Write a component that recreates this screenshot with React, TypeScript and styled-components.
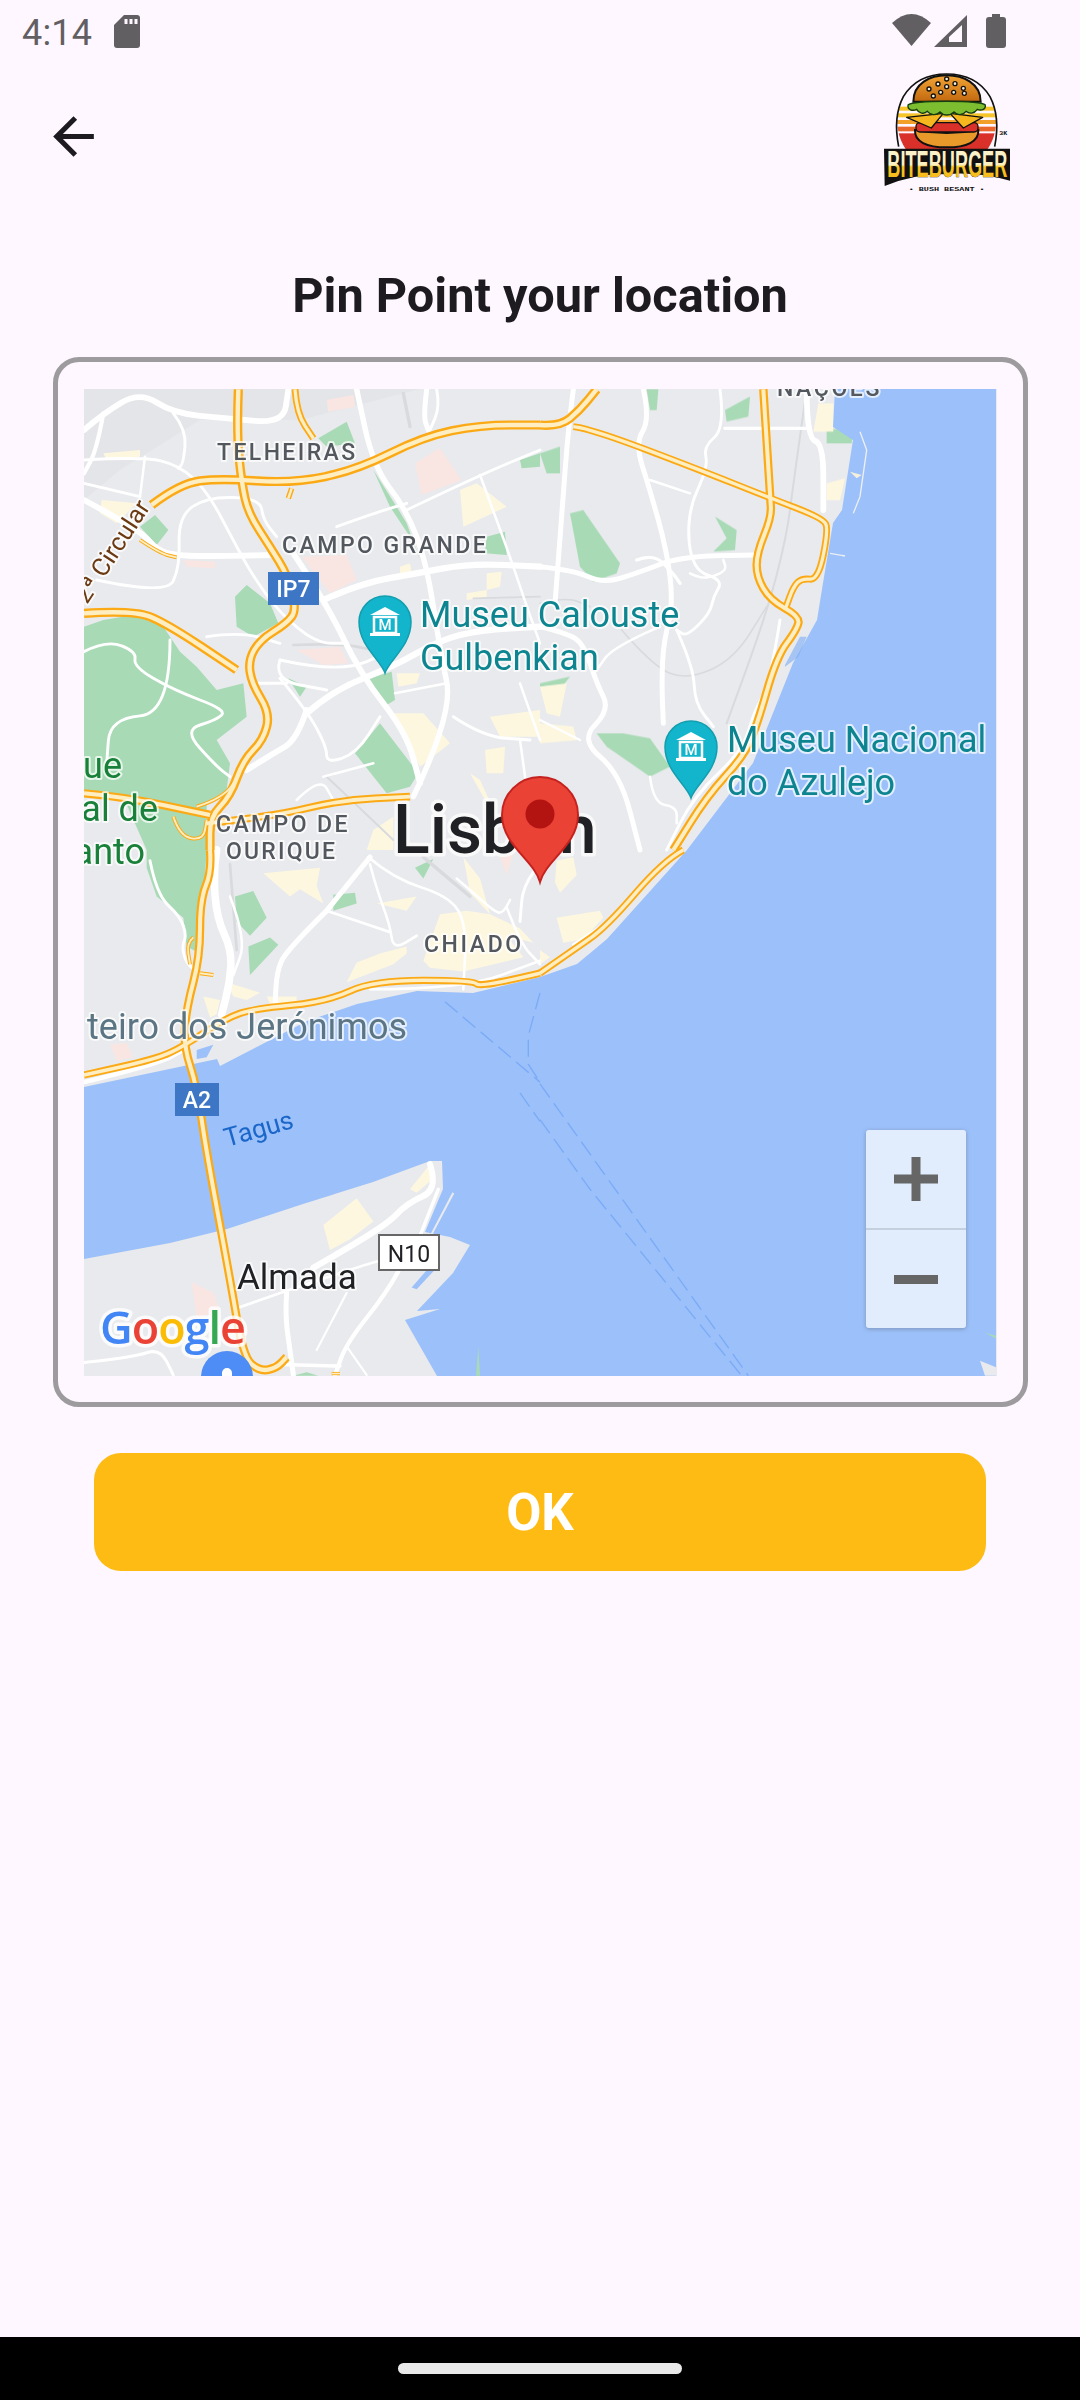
import React from "react";
import styled, { createGlobalStyle } from "styled-components";

const GlobalStyle = createGlobalStyle`
  html, body { margin: 0; padding: 0; background: #fef7ff; }
  body { font-family: Roboto, "Liberation Sans", sans-serif; }
  * { box-sizing: border-box; }
`;

const Page = styled.div`
  width: 1080px;
  height: 2400px;
  display: flex;
  flex-direction: column;
  background: #fef7ff;
  overflow: hidden;
`;
const StatusBar = styled.div`
  height: 64px;
  padding: 14px 74px 0 22px;
  display: flex;
  align-items: flex-start;
  color: #625f63;
`;
const Clock = styled.span`
  font-size: 36px;
  line-height: 36px;
  margin-top: 1px;
  width: 92px;
  letter-spacing: 0.2px;
`;
const StatusSpacer = styled.div`
  flex: 1;
`;
const StatusIcons = styled.div`
  display: flex;
  gap: 3px;
  align-items: flex-start;
`;
const Header = styled.header`
  margin-top: 9px;
  height: 119px;
  padding: 0 70px 0 43px;
  display: flex;
  justify-content: space-between;
  align-items: flex-start;
`;
const BackButton = styled.button`
  margin-top: 33px;
  width: 61px;
  height: 61px;
  padding: 0;
  border: 0;
  background: none;
  color: #1d1b20;
`;
const Title = styled.h1`
  margin: 79px 0 0;
  text-align: center;
  font-size: 48.7px;
  line-height: 50px;
  font-weight: 700;
  color: #1d1b20;
`;
const MapFrame = styled.section`
  margin: 36px 0 0 53px;
  width: 975px;
  height: 1050px;
  padding: 27px 26px 26px 26px;
  border: 5px solid #9e9b9e;
  border-radius: 26px;
`;
const MapBox = styled.div`
  position: relative;
  width: 913px;
  height: 987px;
  overflow: hidden;
  background: #e8eaed;
`;
const MapSvg = styled.svg`
  display: block;
`;
const SoftLayer = styled.g`
  filter: blur(0.5px);
`;
const ZoomControl = styled.div`
  position: absolute;
  right: 31px;
  bottom: 48px;
  width: 100px;
  border-radius: 3px;
  overflow: hidden;
  display: flex;
  flex-direction: column;
  box-shadow: 0 1px 4px rgba(60, 64, 67, 0.35);
`;
const ZoomButton = styled.button<{ $divider?: boolean }>`
  height: ${(p) => (p.$divider ? 100 : 98)}px;
  padding: 0;
  border: 0;
  border-top: ${(p) => (p.$divider ? "2px solid rgba(190,200,215,.8)" : "0")};
  background: rgba(255, 255, 255, 0.7);
  display: flex;
  align-items: center;
  justify-content: center;
`;
const OkButton = styled.button`
  margin: 46px 0 0 94px;
  width: 892px;
  height: 118px;
  border: 0;
  border-radius: 27px;
  background: #febb14;
  color: #fff;
  font-family: Roboto, sans-serif;
  font-size: 51px;
  font-weight: 700;
`;
const Spacer = styled.div`
  flex: 1;
`;
const NavBar = styled.div`
  height: 63px;
  background: #000;
  display: flex;
  justify-content: center;
  padding-top: 26px;
`;
const HomePill = styled.div`
  width: 284px;
  height: 11px;
  border-radius: 6px;
  background: #e9e9e9;
`;
const MapLabel = styled.text<{ $size: number; $color: string; $weight?: number; $spacing?: number; $halo?: number }>`
  font-family: Roboto, sans-serif;
  font-size: ${(p) => p.$size}px;
  font-weight: ${(p) => p.$weight ?? 400};
  letter-spacing: ${(p) => p.$spacing ?? 0}px;
  fill: ${(p) => p.$color};
  stroke: rgba(255, 255, 255, 0.72);
  stroke-width: ${(p) => p.$halo ?? 4}px;
  stroke-linejoin: round;
  paint-order: stroke;
`;
const ShieldText = styled.text<{ $color: string; $size: number; $weight?: number }>`
  font-family: Roboto, sans-serif;
  font-size: ${(p) => p.$size}px;
  font-weight: ${(p) => p.$weight ?? 500};
  fill: ${(p) => p.$color};
  text-anchor: middle;
`;
const GoogleMark = styled.text`
  font-family: "Open Sans", Roboto, sans-serif;
  font-size: 45px;
  font-weight: 600;
  letter-spacing: -1px;
  stroke: rgba(255, 255, 255, 0.8);
  stroke-width: 7px;
  stroke-linejoin: round;
  paint-order: stroke;
`;
const LogoWord = styled.text`
  font-family: "Liberation Sans", sans-serif;
  font-size: 108px;
  font-weight: 700;
  stroke: #111;
  stroke-width: 2px;
  paint-order: stroke;
`;
const LogoTag = styled.text`
  font-family: "Liberation Mono", monospace;
  font-size: 17px;
  font-weight: 700;
  fill: #111;
`;

const smooth = (s: string) => {
  const pts = s.trim().split(/\s+/).map((t) => t.split(",").map(Number));
  if (pts.length < 3) return `M${pts.map((p) => p.join(" ")).join("L")}`;
  let d = `M${pts[0][0]} ${pts[0][1]}`;
  for (let i = 1; i < pts.length - 1; i++) {
    const mx = (pts[i][0] + pts[i + 1][0]) / 2;
    const my = (pts[i][1] + pts[i + 1][1]) / 2;
    d += `Q${pts[i][0]} ${pts[i][1]} ${mx} ${my}`;
  }
  const l = pts[pts.length - 1];
  return `${d}L${l[0]} ${l[1]}`;
};

type Road = [string, number];
type Quad = {
  t: string;
  parks: string[];
  pinks: string[];
  creams: string[];
  rail: Road[];
  whites: Road[];
  highways: Road[];
};

const quads: Quad[] = [
  {
    t: "translate(40 350) scale(.33333)",
    parks: [
      "132,830 190,810 280,795 370,830 420,905 470,950 530,1020 610,1000 620,1100 530,1170 570,1240 560,1320 500,1360 500,1500 320,1500 250,1340 132,1330",
      "585,740 620,705 690,760 715,820 640,860 590,830",
      "300,530 345,495 385,540 350,585",
      "835,265 920,215 945,280 860,290",
      "1000,360 1070,470 1100,520 1140,630 1110,560 1050,470",
      "985,985 1055,965 1065,1050 1040,1065",
      "945,1210 1020,1120 1135,1270 1110,1310 1040,1330",
      "745,985 800,1010 780,1040",
      "1340,560 1395,545 1400,615 1335,610",
      "1440,330 1500,310 1500,350 1445,355",
    ],
    pinks: [
      "860,150 940,135 945,170 865,185",
      "1125,340 1200,295 1265,390 1145,435",
      "785,620 920,615 950,690 870,730",
      "770,900 900,890 925,940 850,945",
      "430,630 525,635 525,655 440,650",
    ],
    creams: [
      "190,310 300,300 300,320 200,330",
      "185,450 290,460 230,520 180,490",
      "1260,420 1310,400 1400,470 1270,530",
      "1070,970 1140,970 1130,1000 1075,1010",
      "1060,1090 1150,1090 1230,1180 1140,1250",
      "1350,1100 1500,1080 1500,1160 1380,1160",
      "1340,670 1385,665 1380,710 1340,720",
      "1280,730 1340,720 1340,740 1280,750",
      "1080,650 1110,640 1115,670 1080,670",
      "1335,1200 1395,1190 1390,1270 1340,1270",
      "1290,1270 1320,1290 1370,1400 1330,1340",
      "1000,1440 1060,1400 1060,1500 980,1500",
    ],
    rail: [["760,885 900,880 1000,900", 8], ["1090,130 1110,230", 10], ["860,1280 1060,1470", 6], ["1300,745 1500,740", 5]],
    whites: [
      ["132,240 190,190 300,125 400,190 560,205 730,220 745,118", 14],
      ["132,450 300,540 350,600 420,620 710,615", 14],
      ["760,610 860,760 960,970 1100,1150 1140,1300", 14],
      ["1120,1340 1240,1090 1200,900 1160,640 1100,480 1000,350 950,118", 13],
      ["850,750 960,700 1130,670 1290,640 1500,650", 15],
      ["800,1090 880,1020 1060,950 1200,870 1320,840 1500,830", 15],
      ["800,1080 770,1170 700,1210 620,1260", 14],
      ["1160,118 1150,200 1165,240", 12],
      ["132,330 310,320 415,345 500,420 590,590 640,680 720,790 830,880 920,880", 7],
      ["132,400 300,440", 7],
      ["190,190 170,300 132,370", 10],
      ["400,190 440,240 430,340 415,355", 7],
      ["315,320 300,440", 6],
      ["170,690 380,735 420,650 415,500 500,440 660,445 670,510 710,560", 7],
      ["1100,480 1320,375 1500,300", 7],
      ["890,530 1000,490 1100,460", 7],
      ["1320,375 1400,590 1450,740 1500,880", 6],
      ["1240,1100 1330,1160 1470,1170", 7],
      ["132,905 200,870 290,905 280,950 400,1020 560,1080 530,1110 430,1140 530,1250 570,1280", 7],
      ["390,870 390,1090 210,1105 200,1240", 7],
      ["720,930 700,990 860,1020", 7],
      ["720,930 900,970 1060,900", 7],
      ["500,860 600,845 720,880", 7],
      ["720,985 800,1080 860,1190 860,1240 950,1210 1020,1100", 7],
      ["850,1280 1000,1240", 6],
      ["1190,118 1200,170 1170,240", 7],
      ["1500,1170 1440,1000", 6],
      ["1065,1030 1220,1000", 6],
      ["770,1350 840,1280 880,1350", 6],
      ["640,1000 740,1000", 7],
      ["1440,1170 1470,1380 1470,1500", 6],
    ],
    highways: [
      ["595,118 590,250 605,400 625,490 690,590 745,680 770,780 740,820 660,870 625,930 635,1000 690,1090 670,1170 610,1230 570,1340 510,1400 510,1500", 24],
      ["335,465 420,400 540,385 760,400 950,360 1150,260 1320,225 1500,225", 24],
      ["132,790 280,780 380,820 590,960", 24],
      ["132,1330 250,1340 510,1395", 22],
      ["500,1420 700,1400 900,1350 1110,1340", 20],
      ["765,118 770,190 820,265", 18],
      ["300,570 360,610 410,622", 10],
      ["470,1370 550,1345 600,1270", 10],
      ["745,445 755,415", 14],
      ["400,1400 420,1460 490,1470 500,1410", 10],
    ],
  },
  {
    t: "translate(540 350) scale(.33333)",
    parks: [
      "320,118 355,118 350,180 330,180",
      "555,180 610,150 630,140 625,200 560,215",
      "860,235 940,240 935,280 860,280",
      "0,310 60,290 60,370 20,370",
      "90,490 130,480 240,640 230,670 160,695 120,650",
      "525,500 590,540 585,600 520,605 560,565",
      "170,1150 250,1150 330,1165 390,1250 330,1280 200,1190",
      "0,1000 90,980 70,1005 0,1010",
    ],
    pinks: [],
    creams: [
      "835,160 880,160 880,245 820,245",
      "860,400 915,385 900,450 860,450",
      "0,1010 80,1000 60,1100 20,1090",
      "0,1120 100,1130 110,1170 0,1180",
    ],
    rail: [["800,118 760,400 740,560 680,790 560,1120", 6], ["245,840 340,950 440,990 580,930 680,770", 5], ["0,760 80,740 150,770", 5]],
    whites: [
      ["100,118 85,230 65,500 45,760", 12],
      ["0,650 100,660 190,700 290,670 420,620 640,615", 12],
      ["310,118 330,210 285,280 330,420 380,600 400,760 370,880 365,1000 370,1120", 12],
      ["800,118 800,265 850,280 850,480", 14],
      ["0,830 80,850 130,880 170,1000 210,1080 120,1170 240,1270 300,1500", 12],
      ["120,1170 0,1110", 6],
      ["540,118 555,235 490,290 505,350 440,490 455,660 550,690 520,740 510,790 440,860 410,840", 7],
      ["555,235 800,235", 8],
      ["330,390 450,430", 6],
      ["290,630 340,610 400,670 420,700", 8],
      ["450,670 480,685 520,680 560,660 550,630", 6],
      ["410,840 460,950 465,1060 520,1130", 7],
      ["360,830 220,890 170,960", 6],
      ["330,1280 340,1360 410,1370 410,1420", 6],
      ["720,810 690,1000 640,1090 610,1200 460,1340 380,1500", 7],
    ],
    highways: [
      ["0,225 60,230 120,180 170,118", 24],
      ["100,230 150,235 480,360 680,440 850,505 865,540 835,690 785,685 760,710 735,780", 18],
      ["670,118 690,440 695,500 650,610 650,680 690,750 780,800 770,840 710,920 650,1130 610,1220 500,1340 400,1500", 22],
    ],
  },
  {
    t: "translate(40 850) scale(.33333 .35714)",
    parks: [
      "320,0 500,0 480,290 440,270 430,190 350,130 320,50",
      "585,130 640,115 680,190 630,240 590,200",
      "625,270 690,245 715,265 630,350",
      "880,125 945,120 950,150 880,170",
      "1125,50 1180,25 1150,80",
      "760,1472 800,1462 835,1472",
    ],
    pinks: ["210,545 260,540 280,580 230,590", "455,1210 520,1240 540,1290 470,1310", "1380,20 1420,10 1400,70"],
    creams: [
      "670,65 840,50 830,100 850,150 780,110 750,130",
      "1010,150 1130,130 1100,170",
      "1200,180 1280,170 1350,180 1440,220 1480,260 1400,240 1450,300 1270,340 1170,330 1150,310",
      "920,370 950,315 1020,290 1100,270 1100,290 1060,320",
      "490,410 540,420 530,460 510,470",
      "680,410 770,410 770,430 690,430",
      "1270,20 1320,80 1350,180 1290,120",
      "560,370 660,400 620,420 580,410",
      "850,1050 950,975 1000,1040 930,1090 870,1120",
      "1110,950 1170,880 1180,920 1130,960",
    ],
    rail: [["1150,20 1290,130", 10], ["570,40 590,280", 8]],
    whites: [
      ["530,0 520,60 530,190 575,280 570,370 545,460", 18],
      ["860,170 740,280 710,340 705,440", 12],
      ["990,20 920,100 860,170", 12],
      ["132,650 350,600 430,560", 10],
      ["1170,880 1195,950 1100,990 1040,1050 820,1170", 14],
      ["1195,950 1140,1080", 8],
      ["740,1240 735,1300 750,1400 760,1470", 12],
      ["1075,1180 1040,1240 920,1380 885,1470", 10],
      ["330,30 350,125 420,185 440,240 425,270 440,320 480,345", 7],
      ["570,130 620,250 580,350", 6],
      ["985,20 1060,80 1230,130 1280,210 1270,390", 6],
      ["990,40 1010,110 1050,210 1060,280 1130,240", 6],
      ["860,170 1050,230", 6],
      ["1400,160 1440,260 1500,320", 6],
      ["1410,140 1390,180 1360,170 1300,120 1250,80", 6],
      ["990,390 1270,390 1500,310", 6],
      ["132,1435 280,1420 360,1395 400,1470", 7],
      ["600,1280 720,1240 980,1160 1020,1150", 6],
      ["830,1400 920,1240", 5],
      ["920,1390 980,1470", 5],
      ["700,1440 900,1445", 8],
      ["1500,40 1450,90 1440,200", 7],
    ],
    highways: [
      ["510,0 515,60 480,140 480,300 440,440 430,545 470,660 500,850 570,1200 610,1420 660,1460 710,1450 740,1420", 22],
      ["1500,345 1320,385 1300,365 1000,365 860,425 640,445 560,470 430,550 350,585 132,630", 18],
      ["480,345 520,350", 10],
      ["460,245 440,260 450,320", 10],
      ["875,1466 900,1466", 8],
    ],
  },
  {
    t: "translate(540 850) scale(.33333 .35714)",
    parks: ["1335,1352 1368,1365 1368,1368"],
    pinks: [],
    creams: [
      "50,30 100,20 110,70 60,120 45,90",
      "50,190 180,170 190,190 130,250 70,260",
      "0,280 30,300 0,320",
    ],
    rail: [],
    whites: [["100,265 190,210", 6]],
    highways: [["430,0 370,30 200,215 100,280 0,345", 18]],
  },
];

const WATER =
  "996,389 835,389 833,427 853,440 842,510 833,523 823,583 817,620 793,663 753,763 687,850 607,939 577,964 540,977 473,993 417,991 357,1004 307,1021 220,1066 217,1059 84,1087 84,1259 170,1243 227,1229 303,1204 373,1182 430,1161 442,1161 443,1189 425,1232 450,1237 470,1245 453,1273 417,1311 440,1309 405,1320 437,1376 996,1376";

const MuseumPin = ({ x, y }: { x: number; y: number }) => (
  <g transform={`translate(${x} ${y})`}>
    <path d="M0 51C-4 38-26 24-26 0A26 26 0 0 1 26 0C26 24 4 38 0 51Z" fill="#12b5cb" stroke="#129eaf" strokeWidth="1.5" />
    <path d="M-15-7L0-15 15-7Z" fill="#fff" />
    <rect x="-11" y="-5" width="22" height="16" fill="none" stroke="#fff" strokeWidth="2.5" />
    <rect x="-15" y="11" width="30" height="3" fill="#fff" />
    <ShieldText $color="#fff" $size={15} y="8">M</ShieldText>
  </g>
);

const MapArt = () => (
  <MapSvg width="913" height="987" viewBox="84 389 913 987">
    <rect x="84" y="389" width="913" height="987" fill="#e8eaed" />
    <SoftLayer>
      <path d="M84 389H420L300 420 200 420 120 470 84 500Z" fill="#e4e5e8" />
      {quads.map((q, i) => (
        <g key={i} transform={q.t}>
          {q.parks.map((s, j) => <polygon key={j} points={s} fill="#a8dab5" />)}
          {q.pinks.map((s, j) => <polygon key={j} points={s} fill="#f9e6e3" />)}
          {q.creams.map((s, j) => <polygon key={j} points={s} fill="#fef7e0" />)}
        </g>
      ))}
      <polygon points={WATER} fill="#9cc0f9" />
      <g transform="translate(40 850) scale(.33333 .35714)">
        <polygon points="1115,1225 1185,1150 1195,1165 1130,1230" fill="#9cc0f9" />
        <polyline points="1240,960 1175,1075" fill="none" stroke="#e8eaed" strokeWidth="6" />
        <polygon points="1315,1390 1320,1472 1308,1472" fill="#a8dab5" />
        <polygon points="470,560 520,545 500,580 470,585" fill="#9cc0f9" />
      </g>
      <g transform="translate(540 850) scale(.33333 .35714)">
        <polygon points="1320,1430 1368,1448 1368,1472 1335,1472" fill="#e8eaed" />
        <polygon points="1335,1352 1368,1360 1368,1368" fill="#a8dab5" />
        <g fill="none" stroke="#7babf7" strokeWidth="4" strokeDasharray="48 20">
          <path d="M0 655 625 1472" />
          <path d="M0 755 150 950 605 1472" />
        </g>
      </g>
      <g transform="translate(40 850) scale(.33333 .35714)" fill="none" stroke="#7babf7" strokeWidth="4" strokeDasharray="48 20">
        <path d="M1215 425 1500 650" />
        <path d="M1500 400 1465 520V600L1500 650" />
        <path d="M1440 680 1500 760" />
      </g>
      <g transform="translate(540 350) scale(.33333)" fill="none" stroke="#eef0f2" strokeWidth="4">
        <path d="M960 245 980 300 960 440 940 490" />
        <path d="M870 610 915 618" />
        <polygon points="930,365 965,375 950,385" fill="#f5efdc" stroke="none" />
        <polygon points="780,860 800,860 775,920 735,950 735,945" fill="#7babf7" stroke="none" opacity=".6" />
      </g>
      {quads.map((q, i) => (
        <g key={i} transform={q.t} fill="none" strokeLinecap="round" strokeLinejoin="round">
          {q.rail.map(([s, w], j) => <path key={j} d={smooth(s)} stroke="#d8dadd" strokeWidth={w} />)}
          {q.whites.map(([s, w], j) => <path key={j} d={smooth(s)} stroke="#fff" strokeWidth={w * 1.25} />)}
        </g>
      ))}
      {quads.map((q, i) => (
        <g key={i} transform={q.t} fill="none" strokeLinecap="butt" strokeLinejoin="round">
          {q.highways.map(([s, w], j) => <path key={j} d={smooth(s)} stroke="#fba914" strokeWidth={w * 1.15} />)}
        </g>
      ))}
      {quads.map((q, i) => (
        <g key={i} transform={q.t} fill="none" strokeLinecap="butt" strokeLinejoin="round">
          {q.highways.map(([s, w], j) => <path key={j} d={smooth(s)} stroke="#feeec2" strokeWidth={w * 0.55} />)}
        </g>
      ))}
    </SoftLayer>

    <MapLabel x="217" y="460" $size={23} $weight={500} $spacing={2.4} $color="#53575e">TELHEIRAS</MapLabel>
    <MapLabel x="282" y="553" $size={23} $weight={500} $spacing={2.5} $color="#53575e">CAMPO GRANDE</MapLabel>
    <MapLabel x="216" y="832" $size={23} $weight={500} $spacing={2.4} $color="#53575e">CAMPO DE</MapLabel>
    <MapLabel x="226" y="859" $size={23} $weight={500} $spacing={2.2} $color="#53575e">OURIQUE</MapLabel>
    <MapLabel x="424" y="952" $size={23} $weight={500} $spacing={2.6} $color="#53575e">CHIADO</MapLabel>
    <MapLabel x="777" y="396" $size={23} $weight={500} $spacing={2.6} $color="#53575e">NAÇÕES</MapLabel>
    <MapLabel x="420" y="627" $size={36} $color="#0d8590">Museu Calouste</MapLabel>
    <MapLabel x="420" y="670" $size={36} $color="#0d8590">Gulbenkian</MapLabel>
    <MapLabel x="727" y="752" $size={36} $color="#0d8590">Museu Nacional</MapLabel>
    <MapLabel x="727" y="795" $size={36} $color="#0d8590">do Azulejo</MapLabel>
    <MapLabel x="122" y="778" textAnchor="end" $size={36} $color="#188038">ue</MapLabel>
    <MapLabel x="158" y="821" textAnchor="end" $size={36} $color="#188038">al de</MapLabel>
    <MapLabel x="145" y="864" textAnchor="end" $size={36} $color="#188038">anto</MapLabel>
    <MapLabel x="407" y="1039" textAnchor="end" $size={36} $color="#5b7584">teiro dos Jerónimos</MapLabel>
    <MapLabel x="237" y="1289" $size={35} $color="#202124">Almada</MapLabel>
    <MapLabel x="393" y="853" $size={68} $weight={500} $color="#202124" $halo={7}>Lisbon</MapLabel>
    <MapLabel transform="translate(227 1147) rotate(-16)" $size={26} $color="#1a66c9" $halo={0}>Tagus</MapLabel>
    <MapLabel transform="translate(87 605) rotate(-57)" $size={25} $color="#6b3a12" $halo={4}>2ª Circular</MapLabel>

    <rect x="268" y="572" width="51" height="33" fill="#3d76c5" />
    <ShieldText x="293.5" y="597" $color="#fff" $size={23}>IP7</ShieldText>
    <rect x="175" y="1083" width="44" height="33" fill="#3d76c5" />
    <ShieldText x="197" y="1108" $color="#fff" $size={23}>A2</ShieldText>
    <rect x="379" y="1235" width="60" height="35" fill="#fff" stroke="#666" strokeWidth="2" />
    <ShieldText x="409" y="1262" $color="#202124" $size={23} $weight={400}>N10</ShieldText>

    <MuseumPin x={385} y={622} />
    <MuseumPin x={691} y={747} />

    <GoogleMark x="100" y="1344">
      <tspan fill="#4285f4">G</tspan>
      <tspan fill="#ea4335">o</tspan>
      <tspan fill="#fbbc05">o</tspan>
      <tspan fill="#4285f4">g</tspan>
      <tspan fill="#34a853">l</tspan>
      <tspan fill="#ea4335">e</tspan>
    </GoogleMark>
    <circle cx="227" cy="1377" r="26" fill="#4e8df5" />
    <path d="M222 1373a5 5 0 0 1 10 0v3h-10zM215 1376h24v4h-24z" fill="#fff" />

    <path d="M540 882C534 860 502 845 502 815A38 38 0 0 1 578 815C578 845 546 860 540 882Z" fill="#ea4335" stroke="#c5221f" strokeWidth="2" />
    <circle cx="540" cy="814" r="14.5" fill="#b31412" />
  </MapSvg>
);

const Logo = () => (
  <svg width="126" height="120" viewBox="72 69 378 360">
    <defs>
      <clipPath id="sun"><circle cx="260" cy="215" r="148" /></clipPath>
      <linearGradient id="bun" x1="0" y1="0" x2="0" y2="1">
        <stop offset="0" stopColor="#f2a535" />
        <stop offset="1" stopColor="#c2680f" />
      </linearGradient>
      <linearGradient id="word" x1="0" y1="0" x2="0" y2="1">
        <stop offset="0" stopColor="#fbf3d0" />
        <stop offset=".5" stopColor="#fbf0c0" />
        <stop offset=".55" stopColor="#f8c623" />
        <stop offset="1" stopColor="#f3b014" />
      </linearGradient>
    </defs>
    <g clipPath="url(#sun)">
      <rect x="100" y="60" width="320" height="130" fill="#fef7ff" />
      <rect x="100" y="170" width="320" height="12" fill="#f6c52a" />
      <rect x="100" y="190" width="320" height="12" fill="#f6c52a" />
      <rect x="100" y="210" width="320" height="12" fill="#f2a02a" />
      <rect x="100" y="230" width="320" height="14" fill="#e9672a" />
      <rect x="100" y="250" width="320" height="50" fill="#d9302a" />
    </g>
    <path d="M116 290C106 240 104 190 130 140 160 90 210 72 260 72S360 90 390 140C416 190 414 240 404 290" fill="none" stroke="#111" strokeWidth="5" />
    <path d="M165 240Q260 258 355 240C357 275 320 292 260 292S163 275 165 240Z" fill="#e9982a" stroke="#111" strokeWidth="6" />
    <rect x="168" y="218" width="186" height="28" rx="12" fill="#d9302a" stroke="#111" strokeWidth="4" />
    <path d="M140 202L250 190 214 234ZM270 190L368 202 310 234Z" fill="#f5b61e" stroke="#111" strokeWidth="4" strokeLinejoin="round" />
    <path d="M160 155C160 100 210 76 260 76S362 100 362 155Z" fill="url(#bun)" stroke="#111" strokeWidth="6" />
    <path d="M144 165C160 150 360 150 376 165 378 180 362 182 352 178 342 192 328 192 318 184 306 198 292 196 282 186 270 198 250 198 240 186 228 198 212 196 202 184 192 194 176 190 170 178 158 184 142 180 144 165Z" fill="#7cbe30" stroke="#143c10" strokeWidth="4" />
    {[[234, 102], [260, 87], [285, 101], [207, 117], [260, 110], [310, 115], [242, 127], [281, 127], [220, 138], [313, 130]].map(([x, y], i) => (
      <circle key={i} cx={x} cy={y} r="6" fill="#f8f2e0" stroke="#111" strokeWidth="4" />
    ))}
    <path d="M72 296H450V392Q350 364 260 372 160 372 74 408Z" fill="#111" />
    <LogoWord x="82" y="382" textLength="360" lengthAdjust="spacingAndGlyphs" fill="url(#word)">BITEBURGER</LogoWord>
    <LogoTag x="146" y="424" textLength="228" lengthAdjust="spacingAndGlyphs">• BUSH BESANT •</LogoTag>
    <LogoTag x="418" y="256" textLength="24" lengthAdjust="spacingAndGlyphs">3K</LogoTag>
  </svg>
);

const BackIcon = () => (
  <svg width="61" height="61" viewBox="0 0 24 24" fill="currentColor">
    <path d="M20 11H7.83l5.59-5.59L12 4l-8 8 8 8 1.41-1.41L7.83 13H20v-2z" />
  </svg>
);

const StatusGlyphs = {
  Sd: () => (
    <svg width="26" height="33" viewBox="0 0 26 33" style={{ marginTop: 1 }}>
      <path d="M10 0H23a3 3 0 0 1 3 3V30a3 3 0 0 1-3 3H3a3 3 0 0 1-3-3V10Z" fill="#625f63" />
      <path d="M10.5 4h3v5h-3zM15.5 4h3v5h-3zM20.5 4h3v5h-3z" fill="#fef7ff" />
    </svg>
  ),
  Wifi: () => (
    <svg width="39" height="32" viewBox="0 0 39 32">
      <path d="M0 9Q19.500-9 39 9L19.500 32Z" fill="#625f63" />
    </svg>
  ),
  Signal: () => (
    <svg width="33" height="32" viewBox="0 0 33 32" style={{ marginTop: 1 }}>
      <path d="M0 32 33 0V32ZM15 22V27H28V10Z" fill="#625f63" fillRule="evenodd" />
    </svg>
  ),
  Battery: () => (
    <svg width="20" height="34" viewBox="0 0 20 34" style={{ marginLeft: 16 }}>
      <path d="M6 0h8v3h3a3 3 0 0 1 3 3V31a3 3 0 0 1-3 3H3a3 3 0 0 1-3-3V6a3 3 0 0 1 3-3h3Z" fill="#625f63" />
    </svg>
  ),
};

export default function App() {
  return (
    <Page>
      <GlobalStyle />
      <StatusBar>
        <Clock>4:14</Clock>
        <StatusGlyphs.Sd />
        <StatusSpacer />
        <StatusIcons>
          <StatusGlyphs.Wifi />
          <StatusGlyphs.Signal />
          <StatusGlyphs.Battery />
        </StatusIcons>
      </StatusBar>
      <Header>
        <BackButton aria-label="Back"><BackIcon /></BackButton>
        <Logo />
      </Header>
      <Title>Pin Point your location</Title>
      <MapFrame>
        <MapBox>
          <MapArt />
          <ZoomControl>
            <ZoomButton aria-label="Zoom in">
              <svg width="44" height="44" viewBox="0 0 44 44"><path d="M17.500 0h9v17.500H44v9H26.500V44h-9V26.500H0v-9h17.500z" fill="#666" /></svg>
            </ZoomButton>
            <ZoomButton $divider aria-label="Zoom out">
              <svg width="44" height="9" viewBox="0 0 44 9"><rect width="44" height="9" fill="#666" /></svg>
            </ZoomButton>
          </ZoomControl>
        </MapBox>
      </MapFrame>
      <OkButton>OK</OkButton>
      <Spacer />
      <NavBar><HomePill /></NavBar>
    </Page>
  );
}
